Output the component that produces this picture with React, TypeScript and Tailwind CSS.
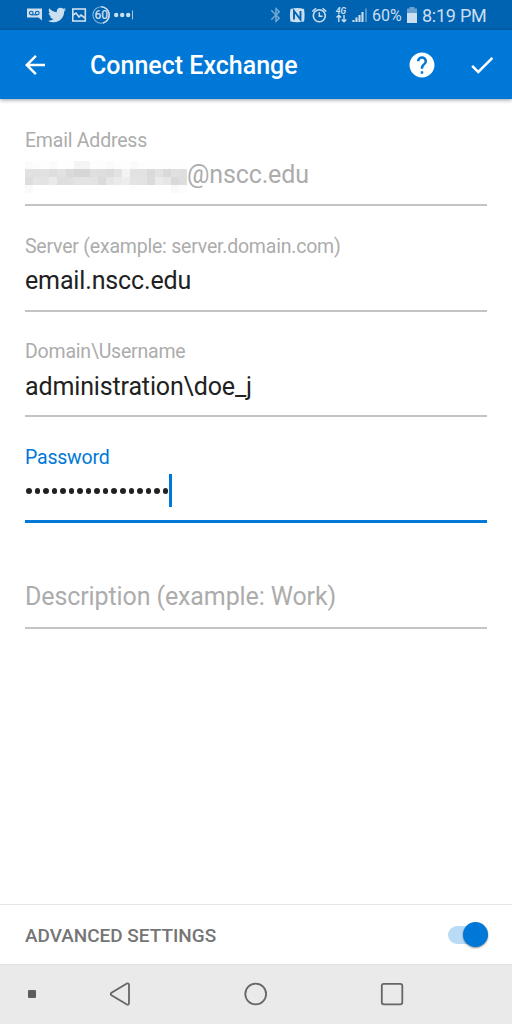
import React, { useState } from 'react';
import { FaTwitter } from 'react-icons/fa';
import { MdArrowBack, MdBluetooth, MdCheck, MdHelp } from 'react-icons/md';

// Opacity of every block that covers the hidden part of the address
const MOSAIC = [
  [3, 2, 1, 3, 1, 1, 9, 8, 1, 2, 3, 2, 1, 4, 2, 1, 1, 2, 1, 1],
  [24, 25, 24, 27, 24, 30, 33, 33, 26, 27, 29, 23, 10, 24, 24, 30, 24, 31, 25, 27],
  [28, 22, 23, 17, 27, 26, 23, 22, 23, 30, 20, 17, 15, 22, 23, 29, 16, 20, 31, 27],
  [4, 0, 0, 0, 0, 0, 0, 0, 0, 0, 0, 0, 0, 1, 0, 0, 0, 0, 5, 2],
];

const StatusBar: React.FC = () => (
  <div className="flex h-[30px] items-center bg-[#0063b1] pl-[26px] text-[#cbdff0]">
    <svg width="110" height="30" viewBox="0 0 110 30" fill="none" stroke="currentColor">
      <path d="M1 8.5h15v12l-3.5-3H1z" fill="currentColor" stroke="none" />
      <g stroke="#0063b1" strokeWidth="1.1">
        <circle cx="5.3" cy="13" r="1.8" />
        <circle cx="11.3" cy="13" r="1.8" />
        <path d="M5.3 14.8h6" />
      </g>
      <FaTwitter x="22" y="6" size={18} />
      <rect x="46.8" y="9" width="12.5" height="12" strokeWidth="1.6" />
      <path d="M47 15l3-2 3 4 2-2 4 3" strokeWidth="1.6" />
      <circle cx="75.2" cy="15" r="8.3" strokeWidth="1.1" opacity=".65" />
      <path d="M75.2 6.7A8.3 8.3 0 0 1 77 23" strokeWidth="1.5" />
      <text x="75.2" y="19.2" textAnchor="middle" fill="currentColor" stroke="none" className="font-[Roboto] text-[12px] font-medium">60</text>
      <g fill="currentColor" stroke="none">
        <circle cx="90.2" cy="15" r="2.2" />
        <circle cx="96.2" cy="15" r="2.2" />
        <circle cx="102.2" cy="15" r="2.2" />
      </g>
      <path d="M106.5 10.5v9" opacity=".8" />
    </svg>
    <svg className="ml-[134px]" width="98" height="30" viewBox="0 0 98 30" fill="none" stroke="currentColor">
      <MdBluetooth x="-3" y="6" size={18} opacity={0.55} />
      <path d="M20.5 9c4.5-1.2 9-1.2 13.500 0 .8 4.200.8 8.400 0 12.600-4.500 1-9 1-13.500 0-.8-4.200-.8-8.400 0-12.600z" fill="currentColor" stroke="none" />
      <path d="M24 19.500V11l6.500 8.500V11" stroke="#0063b1" strokeWidth="1.9" />
      <circle cx="49.3" cy="15.8" r="6" strokeWidth="1.6" />
      <path d="M49.3 12.3v4h3.2M42.3 11.500l3.700-3.300M56.300 11.500l-3.700-3.300" strokeWidth="1.5" />
      <text x="71" y="14" textAnchor="middle" fill="currentColor" stroke="none" className="font-[Roboto] text-[8.5px] font-bold italic">4G</text>
      <path d="M68.8 22v-6.500M66.500 17.600l2.300-2.300 2.300 2.300M74 15v6.500M71.700 19.500l2.300 2.300 2.300-2.300" strokeWidth="1.4" />
      <path d="M83.500 22v-2M86.500 22v-4.500M89.500 22v-7M92.500 22V12" strokeWidth="2.1" />
      <path d="M96 22V8.500" strokeWidth="2" opacity=".4" />
    </svg>
    <span className="ml-[4px] w-[35px] whitespace-nowrap pt-[2px] text-[16px] leading-[30px]">60%</span>
    <svg width="10" height="30" viewBox="0 0 10 30" fill="currentColor">
      <path d="M2.500 7h5v1.500H10V13H0V8.500h2.500z" opacity=".5" />
      <path d="M0 13h10v10H0z" />
    </svg>
    <span className="ml-[5px] whitespace-nowrap pt-[1px] text-[18px] leading-[30px] tracking-[-0.25px]">8:19 PM</span>
  </div>
);

const AppBar: React.FC = () => (
  <header className="relative flex h-[69px] items-center bg-[#0078d7] pl-[20px] text-white shadow-[0_1px_4px_rgba(0,0,0,0.4)]">
    <MdArrowBack size={30} />
    <h1 className="ml-[40px] w-[317px] whitespace-nowrap pt-[3px] text-[25px] font-medium">Connect Exchange</h1>
    <MdHelp size={30} />
    <MdCheck className="ml-[30px]" size={30} />
  </header>
);

const Field: React.FC<{ label: string; active?: boolean; children: React.ReactNode }> = ({ label, active, children }) => (
  <div className={`flex h-[105.7px] flex-col pt-[10px] ${active ? 'text-[#0078d7]' : 'text-[#acacac]'}`}>
    <div className="h-[24px] whitespace-nowrap text-[19.5px] leading-[24px] tracking-[-0.21px]">{label}</div>
    <div className={`flex h-[44px] items-center text-[25px] tracking-[-0.14px] ${active ? '' : 'text-[#212121]'}`}>{children}</div>
    <div className={active ? 'mt-[6px] h-[3px] bg-[#0078d7]' : 'mt-[7px] h-[2px] bg-[#c4c4c4]'} />
  </div>
);

const App: React.FC = () => {
  const [advanced, setAdvanced] = useState(true);

  return (
    <div className="flex h-[1024px] w-[512px] flex-col overflow-hidden bg-white font-[Roboto,sans-serif]">
      <StatusBar />
      <AppBar />

      <main className="flex-1 px-[25px] pt-[20px]">
        <Field label="Email Address">
          <div className="mt-[4px] grid w-[162px] shrink-0 grid-cols-20">
            {MOSAIC.flat().map((level, idx) => (
              <div key={idx} className="h-[8px] bg-[#8a8a8a]" style={{ opacity: level / 95 }} />
            ))}
          </div>
          <span className="text-[#acacac]">@nscc.edu</span>
        </Field>
        <Field label="Server (example: server.domain.com)">
          <span>email.nscc.edu</span>
        </Field>
        <Field label="Domain\Username">
          <span>administration\doe_j</span>
        </Field>
        <Field label="Password" active>
          <div className="-mt-[2px] flex items-center gap-[3px] pl-[1px]">
            {Array.from({ length: 17 }, (_, idx) => (
              <div key={idx} className="size-[5.55px] rounded-full bg-[#212121]" />
            ))}
          </div>
          <div className="-mt-[3px] ml-[1px] h-[33px] w-[2.5px] bg-[#0078d7]" />
        </Field>
        <div className="mt-[39px] h-[48px] border-b-2 border-[#c4c4c4] text-[25px] leading-[32px] tracking-[-0.11px] text-[#acacac]">
          Description (example: Work)
        </div>
      </main>

      <div className="flex h-[60px] items-center justify-between border-t border-[#e6e6e6] pl-[25px] pr-[24px]">
        <span className="pt-[3px] text-[18.95px] font-medium text-[#757575]">ADVANCED SETTINGS</span>
        <button
          type="button"
          onClick={() => setAdvanced(!advanced)}
          className={`flex h-[18px] w-[40px] items-center rounded-full bg-[#b9dbf5] ${advanced ? 'justify-end' : 'justify-start'}`}
        >
          <span className="size-[25px] rounded-full bg-[#0078d7] shadow-[0_1px_2px_rgba(0,0,0,0.45)]" />
        </button>
      </div>

      <nav className="h-[60px] border-t border-[#e0e0e0] bg-[#eaeaea]">
        <svg width="512" height="59" viewBox="0 965 512 59" fill="none" stroke="#666" strokeWidth="1.8">
          <rect x="28" y="990" width="8" height="8" rx="1" fill="#5c5c5c" stroke="none" />
          <path d="M126.5 983.7l-15 9q-1.6 1.3 0 2.6l15 9q2.5 1 2.5-1.5v-17.6q0-2.5-2.5-1.5z" />
          <circle cx="255.7" cy="994" r="10.4" />
          <rect x="381.8" y="983.8" width="20.5" height="20.5" rx="2" />
        </svg>
      </nav>
    </div>
  );
};

export default App;
